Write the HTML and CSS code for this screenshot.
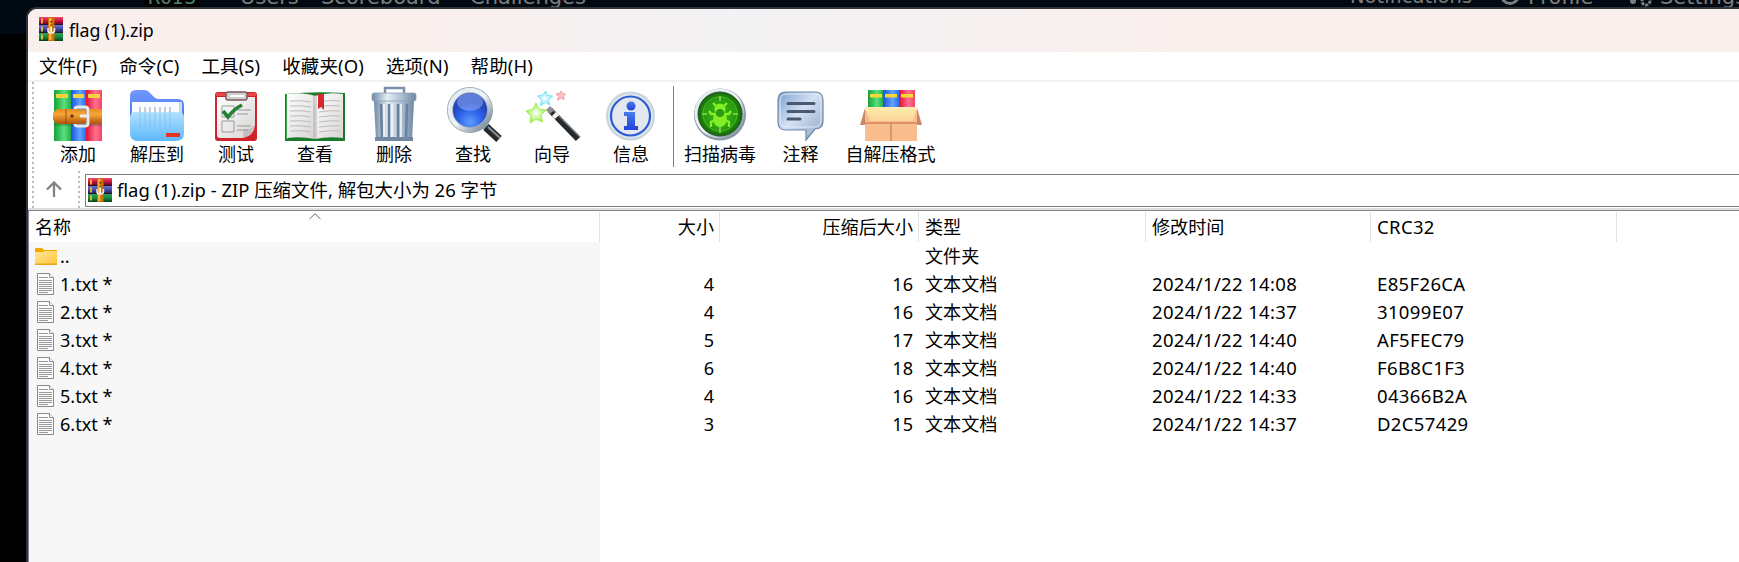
FILE: index.html
```html
<!DOCTYPE html>
<html lang="zh-CN">
<head>
<meta charset="utf-8">
<title>flag (1).zip</title>
<link rel="stylesheet" href="styles.css">
</head>
<body>
<svg width="0" height="0" class="defs">
  <defs>
    <linearGradient id="gGreen"><stop offset="0" stop-color="#16a03c"/><stop offset=".6" stop-color="#5be07c"/><stop offset="1" stop-color="#22ae49"/></linearGradient>
    <linearGradient id="gBlue"><stop offset="0" stop-color="#1f4fe0"/><stop offset=".6" stop-color="#5fa5ff"/><stop offset="1" stop-color="#2b6cf0"/></linearGradient>
    <linearGradient id="gRed"><stop offset="0" stop-color="#e01033"/><stop offset=".6" stop-color="#ff6f8e"/><stop offset="1" stop-color="#f0456a"/></linearGradient>
    <linearGradient id="gBelt" x2="0" y2="1"><stop offset="0" stop-color="#e88a1c"/><stop offset=".35" stop-color="#f6a73a"/><stop offset="1" stop-color="#b2500a"/></linearGradient>
    <linearGradient id="gFold" x2="0" y2="1"><stop offset="0" stop-color="#b4e2ff"/><stop offset="1" stop-color="#5cb8fb"/></linearGradient>
    <linearGradient id="gBack" x2="0" y2="1"><stop offset="0" stop-color="#7199fb"/><stop offset="1" stop-color="#2f67ef"/></linearGradient>
    <linearGradient id="gPaper" x2="1" y2="1"><stop offset="0" stop-color="#fff"/><stop offset="1" stop-color="#d8d3d3"/></linearGradient>
    <linearGradient id="gSteel"><stop offset="0" stop-color="#6e88a6"/><stop offset=".35" stop-color="#e6eef6"/><stop offset=".7" stop-color="#a7bacd"/><stop offset="1" stop-color="#6e88a6"/></linearGradient>
    <linearGradient id="gRim" x2="1" y2="1"><stop offset="0" stop-color="#dfe8ee"/><stop offset=".5" stop-color="#f0f4f7"/><stop offset="1" stop-color="#64788a"/></linearGradient>
    <radialGradient id="gLens" cy=".8"><stop offset="0" stop-color="#5f9cff"/><stop offset=".6" stop-color="#2d63e8"/><stop offset="1" stop-color="#2447bd"/></radialGradient>
    <radialGradient id="gScan"><stop offset="0" stop-color="#35b614"/><stop offset=".7" stop-color="#2a9c10"/><stop offset="1" stop-color="#136508"/></radialGradient>
    <linearGradient id="gNote" x2="1" y2="1"><stop offset="0" stop-color="#7c9fcf"/><stop offset=".45" stop-color="#d4e1f2"/><stop offset="1" stop-color="#8aa2c2"/></linearGradient>
    <linearGradient id="gFlap" x2="0" y2="1"><stop offset="0" stop-color="#ffedae"/><stop offset="1" stop-color="#fad495"/></linearGradient>
    <linearGradient id="gDir" x2="1" y2="1"><stop offset="0" stop-color="#ffe596"/><stop offset="1" stop-color="#ffc83d"/></linearGradient>
    <linearGradient id="gInfo" x2="0" y2="1"><stop offset="0" stop-color="#4a7be8"/><stop offset="1" stop-color="#2243dc"/></linearGradient>
    <linearGradient id="hRed" x2="0" y2="1"><stop offset="0" stop-color="#f04a6c"/><stop offset=".5" stop-color="#c91440"/><stop offset="1" stop-color="#5d0420"/></linearGradient>
    <linearGradient id="hBlue" x2="0" y2="1"><stop offset="0" stop-color="#6b74d8"/><stop offset=".5" stop-color="#4549a8"/><stop offset="1" stop-color="#1c1e58"/></linearGradient>
    <linearGradient id="hGreen" x2="0" y2="1"><stop offset="0" stop-color="#31a060"/><stop offset=".5" stop-color="#178a3c"/><stop offset="1" stop-color="#053c18"/></linearGradient>
    <radialGradient id="sGreen"><stop offset="0" stop-color="#fff"/><stop offset="1" stop-color="#9df04c"/></radialGradient>
    <radialGradient id="sCyan"><stop offset="0" stop-color="#fff"/><stop offset="1" stop-color="#86e6fb"/></radialGradient>
    <symbol id="rar" viewBox="0 0 24 24">
      <path fill="url(#hRed)" d="M0 0h24v7.500H0z"/><path fill="url(#hBlue)" d="M0 8h24v7.500H0z"/><path fill="url(#hGreen)" d="M0 16h24v8H0z"/>
      <path fill="#2a1420" d="M0 7h24v1H0zM0 15h24v1H0z"/>
      <path stroke="#f3bf2b" stroke-width="1.800" d="M3 1.500v5M3 9.500v5M3 17.500v5"/>
      <path fill="#c9700c" d="M9 1q3-2 6.500 0v23H9z"/><path fill="#f3b23b" d="M10 1h2.500v22H10z"/>
      <path fill="none" stroke="#eee" stroke-width="1.500" d="M9 11v3q0 2 3 2t3.500-2v-3"/><path stroke="#fff" stroke-width="1.500" d="M12.300 10v5"/>
      <path fill="#482106" d="M11.500 4h1.500v1.500h-1.500zM11.500 7.500h1.500v1h-1.500z"/>
    </symbol>
    <symbol id="doc" viewBox="0 0 17 22">
      <path fill="#fbfbfb" stroke="#8b8b8b" d="M.5.500h12l4 4v17H.5z"/><path fill="#fff" stroke="#8b8b8b" d="M12.500.500v4h4"/>
      <path stroke="#9a9a9a" d="M2 4.500h9M2 7.500h13M2 9.500h13M2 11.500h13M2 13.500h13M2 15.500h13M2 17.500h13M2 19.500h9"/>
    </symbol>
  </defs>
</svg>

<div class="desktop">
  <div class="site-nav">
    <span class="brand">R0IS</span>
    <span class="nav-left users">Users</span><span class="nav-left scoreboard">Scoreboard</span><span class="nav-left">Challenges</span>
    <span class="nav-right">Notifications</span>
    <svg class="nav-icon" viewBox="0 0 20 20"><circle cx="10" cy="10" r="8.500" fill="none" stroke="#7d7d7d" stroke-width="3"/></svg>
    <span class="nav-profile">Profile</span>
    <svg class="nav-gears" viewBox="0 0 24 20"><circle cx="5" cy="14" r="3" fill="#7d7d7d"/><circle cx="18" cy="14" r="4" fill="none" stroke="#7d7d7d" stroke-width="3" stroke-dasharray="3 1"/></svg>
    <span class="nav-settings">Settings</span>
  </div>
</div>

<div class="window">
  <header class="titlebar"><svg class="rar-icon"><use href="#rar"/></svg><span class="title-text">flag (1).zip</span></header>
  <nav class="menubar"><span>文件(F)</span><span>命令(C)</span><span>工具(S)</span><span>收藏夹(O)</span><span>选项(N)</span><span>帮助(H)</span></nav>

  <div class="toolbar">
    <i class="grip"></i>
    <div class="tool">
      <svg viewBox="0 0 64 56"><path fill="url(#gGreen)" d="M8 4h17v51H8z"/><path fill="url(#gBlue)" d="M25 4h15v51H25z"/><path fill="url(#gRed)" d="M40 4h16v51H40z"/><path fill="#f6d33a" d="M10 8h12v4H10zM27 8h11v4H27zM42 8h12v4H42z"/><path fill="#125f2a" opacity=".3" d="M8 37h48v3H8z"/><path fill="url(#gBelt)" d="M11 23h45v15H11l-4-4v-7z"/><path stroke="#8f4309" stroke-width=".8" d="M20 23v15M43 23v15"/><circle cx="26" cy="30" r="1.700" fill="#6d330a"/><path fill="none" stroke="#e6e9ee" stroke-width="3" d="M29 23q0-2 3-2h7q3 0 3 3v13q0 3-3 3h-7q-3 0-3-2"/><path stroke="#8b939e" stroke-width=".7" fill="none" d="M31 24h9v14h-9"/><path stroke="#eee" stroke-width="3" stroke-linecap="round" d="M35 30h7"/></svg>
      <span>添加</span></div>
    <div class="tool">
      <svg viewBox="0 0 64 56"><path fill="url(#gBack)" d="M5 48V10q0-6 6-6h8q4 0 6 3l4 4q2 2 5 2h19q6 0 6 6v29z"/><path fill="#cbd8e9" d="M54 16h3v18h-3z"/><path fill="#fafcff" d="M7 16h47v20H7z"/><path stroke="#a9b6c6" stroke-width="1.300" d="M15 21v8M20 21v8M25 21v8M30 21v8M35 21v8M40 21v8M45 21v8"/><path fill="url(#gFold)" d="M5 32q0-6 5-6h44q5 0 5 6v15q0 8-8 8H13q-8 0-8-8z"/><path stroke="#81c3ef" stroke-width="1" d="M15 27v16M20 27v16M25 27v16M30 27v16M35 27v16M40 27v16M45 27v16"/><path fill="#e93123" d="M41 47h14v4H41z"/></svg>
      <span>解压到</span></div>
    <div class="tool">
      <svg viewBox="0 0 64 56"><rect x="11" y="6" width="42" height="49" rx="3" fill="#cf2229"/><path fill="#e84a4a" d="M12 7h40v3H12z"/><path fill="url(#gPaper)" d="M13 11h38v28q-1 11-12 13H16q-3 0-3-3z"/><path fill="#a9a1a1" d="M39 52q1-7 0-9 6 2 12-4-2 11-12 13z" opacity=".5"/><rect x="22" y="6" width="21" height="8" rx="2" fill="#cfcfd2" stroke="#7d5a5c" stroke-width="1.500"/><path stroke="#fff" stroke-width="2" d="M26 10h14"/><path fill="none" stroke="#999" d="M18 20h12v11H18zM18 35h12v11H18zM33 24h14M33 28h11M33 40h14M33 44h11"/><path fill="none" stroke="#238136" stroke-width="3.600" d="M19 25l5 6q6-8 14-12"/></svg>
      <span>测试</span></div>
    <div class="tool">
      <svg viewBox="0 0 64 56"><path fill="#187b29" d="M2 8q30-3 60-1v48H2z"/><path fill="#3aa94b" d="M3 8h2v45H3z"/><path fill="url(#gPaper)" d="M4 8q17-2 28 2v43q-14-3-28-1z"/><path fill="url(#gPaper)" d="M32 10q12-4 28-2v44q-14-2-28 1z"/><path fill="#9b9b9b" opacity=".4" d="M30 9h4v44h-4z"/><path fill="none" stroke="#bcbcbc" d="M7 15q12-1 21 1M7 20q12-1 21 1M7 25q12-1 21 1M7 30q12-1 21 1M7 35q12-1 21 1M7 40q12-1 21 1M7 45q12-1 21 1M41 15q8-1 16 0M41 20q8-1 16 0M36 26q12-2 21-1M36 31q12-2 21-1M36 36q12-2 21-1M36 41q12-2 21-1M36 46q12-2 21-1"/><path fill="#d62a2f" d="M35 8h6v16l-3-3-3 2z"/></svg>
      <span>查看</span></div>
    <div class="tool">
      <svg viewBox="0 0 64 56"><path fill="none" stroke="#7a8fa8" stroke-width="2.500" d="M23 7V2h19v5"/><path fill="url(#gSteel)" d="M12 15h40l-2 40H14z"/><path stroke="#68809b" stroke-width="2.500" stroke-linecap="round" d="M19 19l1 31M27 19v31M36 19v31M45 19l-1 31"/><path stroke="#f4f8fb" stroke-width="1.500" d="M22 18v34M30 18v34M39 18v34"/><path fill="#7187a2" d="M13 51h38v4H13z"/><rect x="10" y="7" width="44" height="8" rx="2" fill="url(#gSteel)" stroke="#8ca0b6" stroke-width=".8"/></svg>
      <span>删除</span></div>
    <div class="tool">
      <svg viewBox="0 0 64 56"><path stroke="#8a949c" stroke-width="5" d="M41 38l6 6"/><path stroke="#252a2d" stroke-width="8" d="M45 41l13 12"/><path stroke="#899095" stroke-width="2" d="M47 41l12 11"/><circle cx="29" cy="24" r="20" fill="url(#gLens)" stroke="#8fa3b2" stroke-width="6"/><circle cx="29" cy="24" r="20" fill="none" stroke="url(#gRim)" stroke-width="4.500"/><ellipse cx="29" cy="16" rx="13" ry="9" fill="#a9c2ff" opacity=".45"/></svg>
      <span>查找</span></div>
    <div class="tool">
      <svg viewBox="0 0 64 56"><path fill="url(#sGreen)" stroke="#9af04a" d="M16 17l3 6 7 1-5 5 1.500 7-6.500-3-6 4 1-7-5-5 7-2z"/><path fill="url(#sCyan)" stroke="#7fe3f8" d="M25.500 5l2 4.500 5 .5-4 4 1.500 5-4.500-2.500-5 3 1-5.500-4-4 5.500-1z"/><path fill="#ffc2c6" stroke="#f29aa3" d="M41 5l1.500 2.500 3 .5-2 2 .5 3.500-3-1.500-3.500 2 1-3.500-2.500-2.500 3.500-.5z"/><path stroke="#24292b" stroke-width="6" d="M30 24l28 29"/><path stroke="#777d80" stroke-width="1.500" d="M32 23l28 28"/><path stroke="#8d8f90" stroke-width="6" d="M28 22l4 4"/><path stroke="#f5f5f5" stroke-width="6" d="M34 28l3 3"/></svg>
      <span>向导</span></div>
    <div class="tool">
      <svg viewBox="0 0 64 56"><circle cx="31.500" cy="30" r="24.500" fill="#cad4dd"/><circle cx="31.500" cy="30" r="22.500" fill="#dce5ec"/><circle cx="31.500" cy="30" r="19.500" fill="#e3e8ee" stroke="#2b5bd6" stroke-width="2.200"/><g fill="url(#gInfo)"><circle cx="32" cy="20" r="4.500"/><path d="M25 26h11v14h3v4H25v-4h3V30h-3z"/></g></svg>
      <span>信息</span></div>
    <i class="divider"></i>
    <div class="tool tool-scan">
      <svg viewBox="0 0 64 56"><circle cx="32" cy="28.500" r="26" fill="#8696a4"/><circle cx="31.500" cy="27.500" r="25" fill="url(#gRim)"/><circle cx="32" cy="28" r="22" fill="url(#gScan)" stroke="#245329"/><circle cx="32" cy="28" r="17" fill="none" stroke="#4fb82c"/><path stroke="#67d13d" stroke-width="2" d="M32 10v5M32 41v6M14 28h5M45 28h5"/><g stroke="#83ee27" stroke-width="2.400" fill="none"><path d="M28 20l-3-3M36 20l3-3M27 28h-4l-2-3M37 28h4l2-3M27 34l-4 2v5M37 34l4 2v5"/></g><ellipse cx="32" cy="33" rx="7" ry="8" fill="#83ee27"/><circle cx="32" cy="23" r="5.500" fill="#83ee27"/><circle cx="32" cy="27" r="4" fill="#299b14"/></svg>
      <span>扫描病毒</span></div>
    <div class="tool">
      <svg viewBox="0 0 64 56"><path fill="url(#gNote)" stroke="#6c87ab" stroke-width="1.200" d="M17 6h29q8 0 8 8v21q0 8-8 8l-9 11V44H17q-8 0-8-8V14q0-8 8-8z"/><path fill="none" stroke="#e0e9f5" d="M18 8h27q7 0 7 7v19q0 7-7 7H18q-7 0-7-7V15q0-7 7-7z"/><path stroke="#4a5872" stroke-width="3" stroke-linecap="round" d="M19 17.500h26M19 25.500h26M19 33h12"/></svg>
      <span>注释</span></div>
    <div class="tool tool-sfx">
      <svg viewBox="0 0 64 56"><path fill="url(#gGreen)" d="M9 4h15v20H9z"/><path fill="url(#gBlue)" d="M24 4h16v20H24z"/><path fill="url(#gRed)" d="M40 4h16v20H40z"/><path fill="#f7d833" d="M11 8h12v3.500H11zM26 8h12v3.500H26zM42 8h12v3.500H42z"/><path fill="#c8866a" d="M6 22L1 39h7zM58 22l5 17h-7z"/><path fill="#f9bd8d" d="M6 24h52v31H6z"/><path fill="#de9268" d="M6 36h52v2H6z"/><path stroke="#cf8863" stroke-width="1.500" d="M32 37v18"/><path fill="url(#gFlap)" d="M6 21h52l-4 14H11z"/></svg>
      <span>自解压格式</span></div>
  </div>

  <div class="address-row">
    <i class="grip"></i>
    <svg class="up" viewBox="0 0 16 16"><path fill="none" stroke="#838383" stroke-width="2.300" d="M8 16V1.500M1 8.500l7-7 7 7"/></svg>
    <i class="grip"></i>
    <div class="address"><svg class="rar-icon"><use href="#rar"/></svg><span>flag (1).zip - ZIP 压缩文件, 解包大小为 26 字节</span></div>
  </div>

  <main class="list">
    <div class="row head"><span class="name">名称<svg class="sort" viewBox="0 0 12 7"><path fill="none" stroke="#666" d="M.5 6L6 .8 11.500 6"/></svg></span><span class="num">大小</span><span class="num">压缩后大小</span><span>类型</span><span>修改时间</span><span class="latin">CRC32</span></div>
    <div class="row"><span class="name"><svg class="dir" viewBox="0 0 22 17"><path fill="#f2a900" d="M0 1q0-1 1-1h6l2 2h13v4H0z"/><path fill="url(#gDir)" d="M0 4h8l2-1h12v13H0z"/><path fill="#e9a917" d="M0 15.500h22V17H0z"/></svg>..</span><span></span><span></span><span>文件夹</span><span></span><span></span></div>
    <div class="row"><span class="name"><svg class="doc"><use href="#doc"/></svg>1.txt *</span><span class="num">4</span><span class="num">16</span><span>文本文档</span><span class="latin">2024/1/22 14:08</span><span class="latin">E85F26CA</span></div>
    <div class="row"><span class="name"><svg class="doc"><use href="#doc"/></svg>2.txt *</span><span class="num">4</span><span class="num">16</span><span>文本文档</span><span class="latin">2024/1/22 14:37</span><span class="latin">31099E07</span></div>
    <div class="row"><span class="name"><svg class="doc"><use href="#doc"/></svg>3.txt *</span><span class="num">5</span><span class="num">17</span><span>文本文档</span><span class="latin">2024/1/22 14:40</span><span class="latin">AF5FEC79</span></div>
    <div class="row"><span class="name"><svg class="doc"><use href="#doc"/></svg>4.txt *</span><span class="num">6</span><span class="num">18</span><span>文本文档</span><span class="latin">2024/1/22 14:40</span><span class="latin">F6B8C1F3</span></div>
    <div class="row"><span class="name"><svg class="doc"><use href="#doc"/></svg>5.txt *</span><span class="num">4</span><span class="num">16</span><span>文本文档</span><span class="latin">2024/1/22 14:33</span><span class="latin">04366B2A</span></div>
    <div class="row"><span class="name"><svg class="doc"><use href="#doc"/></svg>6.txt *</span><span class="num">3</span><span class="num">15</span><span>文本文档</span><span class="latin">2024/1/22 14:37</span><span class="latin">D2C57429</span></div>
    <div class="row filler"><span class="name"></span></div>
  </main>
</div>
</body>
</html>
```
FILE: styles.css
```css
* { box-sizing: border-box; }
body { margin: 0; width: 1739px; height: 562px; overflow: hidden; position: relative; background: #000; color: #000; font: 18.1px/24px "Noto Sans", "Noto Sans CJK SC", sans-serif; }
svg { display: block; flex: none; }
.defs { position: absolute; }
.desktop { height: 34px; background: #010a12; overflow: hidden; }
.site-nav { display: flex; height: 7px; overflow: hidden; color: #7d7d7d; font: 21px/24px "DejaVu Sans", sans-serif; white-space: nowrap; align-items: flex-end; }
.site-nav > * { flex: none; margin-bottom: -2px; }
.brand { margin-left: 144px; width: 56px; padding-left: 4px; background: #000; color: #527d72; font: 20px/24px "DejaVu Sans Mono", monospace; }
.nav-left { margin-left: 28px; }
.users { margin-left: 40px; width: 55px; }
.scoreboard { margin-left: 26px; width: 121px; }
.nav-right { margin-left: auto; width: 124px; font-size: 19.5px; }
.nav-icon { width: 20px; height: 20px; margin: 0 8px 2px 26px; }
.nav-profile { width: 69px; }
.nav-gears { width: 24px; height: 20px; margin: 0 8px 0 31px; }
.nav-settings { width: 79px; }

/* The window hangs over the page behind it */
.window { position: absolute; left: 26px; top: 7px; width: 1721px; height: 565px; display: flex; flex-direction: column; border: 2px solid #303338; border-radius: 11px 0 0 0; background: #fff; overflow: hidden; }
.titlebar { flex: none; height: 43px; display: flex; align-items: center; padding: 0 0 0 11px; gap: 6px; background: linear-gradient(90deg, #f9efed 0, #f9efed 400px, #f3f2f4 700px, #f9efed 1150px); }
.rar-icon { width: 24px; height: 24px; }
.titlebar .rar-icon { margin-top: -4px; }
.title-text { font-size: 17.8px; margin-top: -2px; letter-spacing: -.1px; }
.menubar { flex: none; height: 30px; display: flex; gap: 22px; padding: 2px 0 0 11px; border-bottom: 2px solid #f1f1f1; font-size: 18.5px; letter-spacing: .1px; }
.toolbar { flex: none; height: 89px; display: flex; padding-left: 4px; font-size: 18px; }
.grip { flex: none; width: 2px; height: 100%; background: repeating-linear-gradient(#bbb 0 2px, #fff 2px 5px); }
.tool { flex: none; width: 79px; display: flex; flex-direction: column; align-items: center; padding-top: 4px; white-space: nowrap; }
.grip + .tool { margin-left: 4.500px; }
.tool svg { width: 64px; height: 56px; }
.divider { width: 1px; height: 81px; margin: 4px 5px 0 2.500px; background: #808080; }
.tool-scan { width: 82px; }
.tool-sfx { width: 101px; }
.address-row { flex: none; height: 39px; display: flex; padding-left: 4px; border-bottom: 2px solid #dedede; }
.up { width: 16px; height: 16px; margin: 10px 16px 0 12px; }
.address { flex: 1; height: 33px; margin: 3px 0 0 5px; padding: 0 0 2px 2px; display: flex; align-items: center; gap: 5px; border: 1px solid #7f7f7f; font-size: 18.45px; }
.list { flex: 1; display: flex; flex-direction: column; border: solid #858292; border-width: 1px 0 0 1px; }
.row { flex: none; height: 28px; display: grid; grid-template-columns: 571px 120px 199px 227px 225px 246px; align-items: stretch; line-height: 28px; }
.row > span { padding: 0 5px 0 6px; border-right: 1px solid transparent; }
.row .num { text-align: right; }
.row .latin { font-size: 18.5px; letter-spacing: .35px; }
.row .name { display: flex; align-items: center; gap: 6px; background: #f7f7f7; }
.head { height: 31px; line-height: 30px; padding-top: 1px; }
.head > span { border-right-color: #e2e2e2; }
.head .name { background: #fff; position: relative; }
.sort { position: absolute; left: 280px; top: 1px; width: 12px; height: 7px; }
.dir { width: 22px; height: 17px; margin: 0 -3px 0 0; }
.doc { width: 17px; height: 22px; margin-left: 2px; }
.filler { flex: 1; }
```
